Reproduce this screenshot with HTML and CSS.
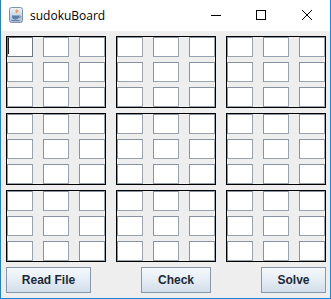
FILE: index.html
```html
<!DOCTYPE html>
<html>
<head>
<meta charset="utf-8">
<title>sudokuBoard</title>
<link rel="stylesheet" href="styles.css">
</head>
<body>
<div class="window">
  <div class="titlebar">
    <svg class="app-icon" width="16" height="16" viewBox="0 0 16 16">
      <defs>
        <linearGradient id="ig" x1="0" y1="0" x2="0" y2="1">
          <stop offset="0" stop-color="#eef3f8"/>
          <stop offset="1" stop-color="#a9bdd1"/>
        </linearGradient>
      </defs>
      <rect x="1.5" y="0.5" width="13" height="15" rx="2" fill="url(#ig)" stroke="#7b93ab"/>
      <path d="M8.5 2.5c-1.5 1.2 1 2-0.5 3.5M10 3c-0.8 0.8 0.6 1.3-0.3 2.2" fill="none" stroke="#e7751d" stroke-width="1"/>
      <path d="M4 8.5h7v1.5c0 1.6-1.4 2.5-3.5 2.5S4 11.6 4 10z" fill="#5b7fa6"/>
      <path d="M11 9h1.2c0.8 0 0.8 1.6-0.3 1.6H11" fill="none" stroke="#5b7fa6" stroke-width="0.9"/>
      <path d="M3.5 13.5h8" stroke="#5b7fa6" stroke-width="1"/>
    </svg>
    <span class="title">sudokuBoard</span>
    <div class="controls">
      <span class="ctl ctl-min"><svg width="10" height="10" viewBox="0 0 10 10"><path d="M0 5.5h10" stroke="#000" stroke-width="1"/></svg></span>
      <span class="ctl ctl-max"><svg width="10" height="10" viewBox="0 0 10 10"><rect x="0.5" y="0.5" width="9" height="9" fill="none" stroke="#000" stroke-width="1"/></svg></span>
      <span class="ctl ctl-close"><svg width="10" height="10" viewBox="0 0 10 10"><path d="M0 0L10 10M10 0L0 10" stroke="#000" stroke-width="1"/></svg></span>
    </div>
  </div>
  <div class="content">
    <div class="board">
      <div class="block"><div class="cell focused"><span class="caret"></span></div><div class="cell"></div><div class="cell"></div><div class="cell"></div><div class="cell"></div><div class="cell"></div><div class="cell"></div><div class="cell"></div><div class="cell"></div></div>
      <div class="block"><div class="cell"></div><div class="cell"></div><div class="cell"></div><div class="cell"></div><div class="cell"></div><div class="cell"></div><div class="cell"></div><div class="cell"></div><div class="cell"></div></div>
      <div class="block"><div class="cell"></div><div class="cell"></div><div class="cell"></div><div class="cell"></div><div class="cell"></div><div class="cell"></div><div class="cell"></div><div class="cell"></div><div class="cell"></div></div>
      <div class="block"><div class="cell"></div><div class="cell"></div><div class="cell"></div><div class="cell"></div><div class="cell"></div><div class="cell"></div><div class="cell"></div><div class="cell"></div><div class="cell"></div></div>
      <div class="block"><div class="cell"></div><div class="cell"></div><div class="cell"></div><div class="cell"></div><div class="cell"></div><div class="cell"></div><div class="cell"></div><div class="cell"></div><div class="cell"></div></div>
      <div class="block"><div class="cell"></div><div class="cell"></div><div class="cell"></div><div class="cell"></div><div class="cell"></div><div class="cell"></div><div class="cell"></div><div class="cell"></div><div class="cell"></div></div>
      <div class="block"><div class="cell"></div><div class="cell"></div><div class="cell"></div><div class="cell"></div><div class="cell"></div><div class="cell"></div><div class="cell"></div><div class="cell"></div><div class="cell"></div></div>
      <div class="block"><div class="cell"></div><div class="cell"></div><div class="cell"></div><div class="cell"></div><div class="cell"></div><div class="cell"></div><div class="cell"></div><div class="cell"></div><div class="cell"></div></div>
      <div class="block"><div class="cell"></div><div class="cell"></div><div class="cell"></div><div class="cell"></div><div class="cell"></div><div class="cell"></div><div class="cell"></div><div class="cell"></div><div class="cell"></div></div>
    </div>
    <div class="buttons">
      <button class="btn btn-read">Read File</button>
      <button class="btn btn-check">Check</button>
      <button class="btn btn-solve">Solve</button>
    </div>
  </div>
</div>
</body>
</html>
```
FILE: styles.css
```css
html, body {
  margin: 0;
  padding: 0;
  background: #ffffff;
}

.window {
  width: 331px;
  height: 299px;
  box-sizing: border-box;
  border: 1px solid #1883d7;
  border-top: none;
  display: flex;
  flex-direction: column;
  background: #eeeeee;
}

.titlebar {
  height: 31px;
  flex: 0 0 31px;
  background: #ffffff;
  display: flex;
  align-items: center;
  position: relative;
}

.app-icon {
  margin-left: 7px;
  margin-top: -1px;
}

.title {
  margin-left: 6px;
  font-family: "Open Sans", "Noto Sans", sans-serif;
  font-size: 12px;
  color: #000000;
  margin-top: -1px;
}

.controls {
  margin-left: auto;
  display: flex;
  height: 100%;
}

.ctl {
  width: 46px;
  height: 31px;
  display: flex;
  align-items: center;
  justify-content: center;
}

.ctl svg {
  display: block;
}

.ctl-min { width: 45px; margin-top: -1px; }
.ctl-max { width: 45px; margin-top: -1px; }
.ctl-close { width: 47px; margin-top: -1px; }

.content {
  flex: 1;
  padding: 5px 4px 5px 5px;
  display: flex;
  flex-direction: column;
  gap: 5px;
}

.board {
  display: grid;
  grid-template-columns: repeat(3, 100px);
  grid-auto-rows: 72px;
  column-gap: 10px;
  row-gap: 5px;
}

.block {
  border: 1px solid #000000;
  display: grid;
  grid-template-columns: repeat(3, 26px);
  grid-auto-rows: 20px;
  column-gap: 10px;
  row-gap: 5px;
}

.cell {
  box-sizing: border-box;
  background: #ffffff;
  border: 1px solid #8793a0;
  border-right-color: #98a3ae;
  border-bottom-color: #98a3ae;
  position: relative;
}

.cell.focused {
  border-color: #6f7880;
}

.caret {
  position: absolute;
  left: 0;
  top: 0;
  width: 1px;
  height: 16px;
  background: #222222;
}

.buttons {
  display: flex;
  justify-content: space-between;
  height: 26px;
}

.btn {
  box-sizing: border-box;
  height: 26px;
  margin: 0;
  padding: 0;
  border: 1px solid #8797aa;
  border-radius: 0;
  background: linear-gradient(to bottom, #f6f9fc 0%, #e7eef6 45%, #d2deeb 100%);
  font-family: "Liberation Sans", Arial, sans-serif;
  font-weight: bold;
  font-size: 12px;
  color: #1d2937;
}

.btn-read { width: 85px; }
.btn-check { width: 70px; }
.btn-solve { width: 65px; }
```
